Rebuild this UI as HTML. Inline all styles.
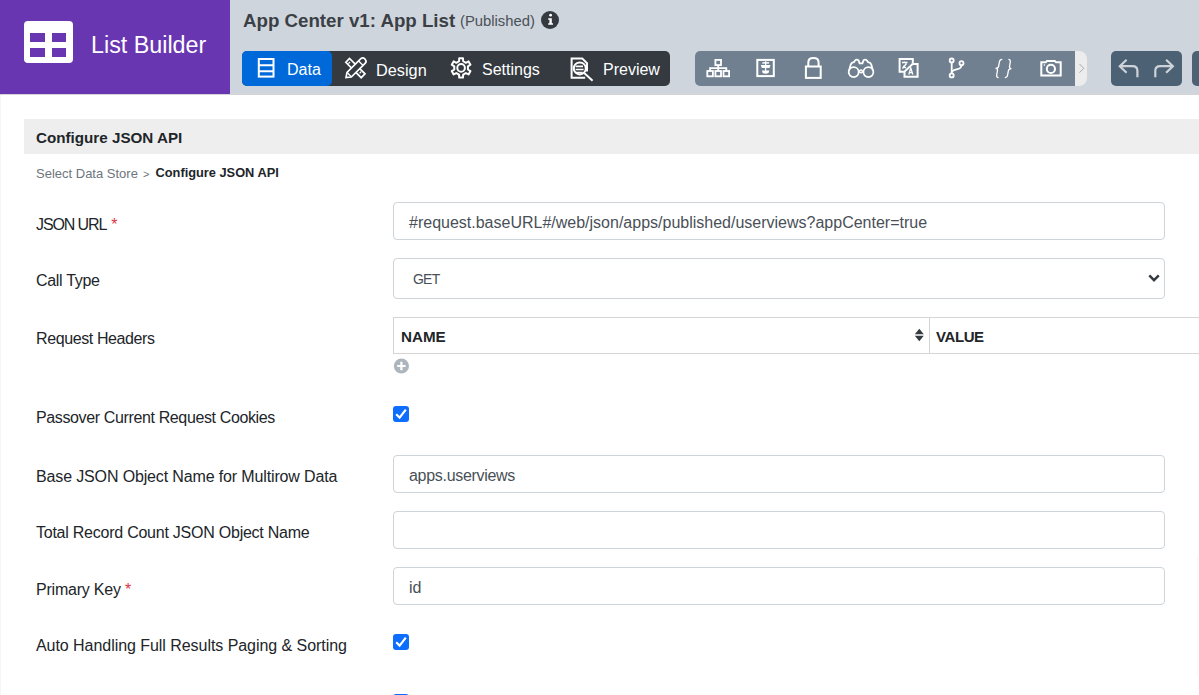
<!DOCTYPE html>
<html><head><meta charset="utf-8">
<style>
*{box-sizing:border-box;margin:0;padding:0}
html,body{width:1199px;height:695px;overflow:hidden;background:#fff;font-family:"Liberation Sans",sans-serif;color:#212529}
.abs{position:absolute;white-space:nowrap}
#hdr{position:absolute;left:0;top:0;width:1199px;height:94px;background:#cfd5dc}
#hdrline{position:absolute;left:0;top:93px;width:1199px;height:2px;background:#d3d5d8}
#brand{position:absolute;left:0;top:0;width:230px;height:94px;background:#6936b1}
#logo{position:absolute;left:24px;top:21px;width:48.5px;height:42px;background:#fff;border-radius:4px}
#logo i{position:absolute;width:14.7px;height:9px;background:#6936b1}
.t{position:absolute;white-space:nowrap;line-height:1}
.lbl{position:absolute;left:36px;font-size:16px;line-height:17px;color:#212529;white-space:nowrap}
.req{color:#dc3545}
.inp{position:absolute;left:393px;width:772px;height:38px;border:1px solid #ced4da;border-radius:4px}
.itxt{position:absolute;left:409px;font-size:16px;line-height:17px;color:#495057;white-space:nowrap}
.chk{position:absolute;left:393px;width:16px;height:16px;background:#0d6efd;border-radius:3px}
svg{position:absolute;left:0;top:0;overflow:visible}
</style></head>
<body>
<div id="hdr"></div>
<div id="hdrline"></div>
<div id="brand">
  <div id="logo">
    <i style="left:6.4px;top:12px"></i><i style="left:27.6px;top:12px"></i>
    <i style="left:6.4px;top:27.2px"></i><i style="left:27.6px;top:27.2px"></i>
  </div>
</div>
<div class="t" style="left:91px;top:33.5px;font-size:23.3px;color:#fff">List Builder</div>
<div class="t" style="left:243px;top:11.5px;font-size:18.7px;font-weight:bold;color:#3a4046">App Center v1: App List</div>
<div class="t" style="left:460px;top:14.1px;font-size:14.8px;color:#495057">(Published)</div>
<div class="abs" style="left:541px;top:10.5px;width:18px;height:18px;border-radius:50%;background:#343a40"></div>

<!-- main buttons -->
<div class="abs" style="left:242px;top:51px;width:428px;height:35px;border-radius:5px;background:#343a40"></div>
<div class="abs" style="left:242px;top:51px;width:90px;height:35px;border-radius:5px;background:#0069d9"></div>
<div class="t" style="left:287px;top:61.5px;font-size:16px;color:#fff">Data</div>
<div class="t" style="left:376px;top:61.5px;font-size:16.3px;color:#fff">Design</div>
<div class="t" style="left:482px;top:61.5px;font-size:16px;color:#fff">Settings</div>
<div class="t" style="left:603px;top:61.5px;font-size:16px;color:#fff">Preview</div>

<!-- tool bar -->
<div class="abs" style="left:695px;top:51px;width:392px;height:35px;border-radius:5px 8px 8px 5px;background:#ececec"></div>
<div class="abs" style="left:695px;top:51px;width:380px;height:35px;border-radius:5px 0 0 5px;background:#708090"></div>
<div class="abs" style="left:1111px;top:51px;width:71px;height:35px;border-radius:5px;background:#4d6174"></div>
<div class="abs" style="left:1192px;top:51px;width:20px;height:35px;border-radius:5px;background:#4d6174"></div>

<svg width="1199" height="695" viewBox="0 0 1199 695">
 <g fill="none" stroke="#fff" stroke-width="2">
  <!-- info i -->
  <!-- data icon -->
  <rect x="258.8" y="59" width="14.7" height="17.6"/>
  <path d="M259 65.3H274M259 71.3H274"/>
  <!-- design: ruler + pencil -->
  <path d="M345.8 62.3L349.5 58.4L365 73.8L361.2 77.7Z" stroke-width="1.7"/><path d="M348.4 63.6L350 62M359.6 73.2L361.2 71.6" stroke-width="1.3"/>
  <path d="M346 77.6L347 72.4L360.6 58.9Q362.8 56.9 365 59.1L365.1 59.2Q367.1 61.4 365.1 63.4L351.3 77Z" fill="#343a40" stroke-width="1.7"/><path d="M347.2 72.5L351.2 76.8M358.6 61L363.2 65.5" stroke-width="1.3"/>
  <!-- gear -->
  <circle cx="461.1" cy="67.9" r="3.8"/>
  <path d="M459.05 61.21 L459.21 58.18 L462.99 58.18 L463.15 61.21 L465.87 62.78 L468.57 61.41 L470.46 64.68 L467.92 66.33 L467.92 69.47 L470.46 71.12 L468.57 74.39 L465.87 73.02 L463.15 74.59 L462.99 77.62 L459.21 77.62 L459.05 74.59 L456.33 73.02 L453.63 74.39 L451.74 71.12 L454.28 69.47 L454.28 66.33 L451.74 64.68 L453.63 61.41 L456.33 62.78Z" stroke-linejoin="round"/>
  <!-- preview doc -->
  <path d="M585.2 77.8H571.6V58.4H582.2L587 63.2V71.5"/>
  <circle cx="579.8" cy="68.4" r="6"/>
  <path d="M575.6 66.4H583M575.6 69.5H583.6M575.6 72.6H582.6" stroke-width="1.6"/>
  <path d="M584.2 73L592.6 80.8" stroke-width="2"/>
 </g>
 <g fill="none" stroke="#fff" stroke-width="1.8">
  <!-- sitemap -->
  <rect x="715.4" y="59.9" width="5.6" height="5.2"/>
  <rect x="707.3" y="71" width="5.6" height="5.3"/>
  <rect x="715.4" y="71" width="5.6" height="5.3"/>
  <rect x="723.5" y="71" width="5.6" height="5.3"/>
  <path d="M718.2 65V71M710.1 71V68.2H726.3V71"/>
  <!-- form icon -->
  <rect x="757.3" y="59.9" width="16.5" height="16.2" stroke-width="2"/>
  <path d="M765.6 61.2V71" stroke-width="1.2"/>
  <path d="M762.3 62.9H769" stroke-width="1.5"/>
  <path d="M760.8 65H770.5L769.5 67.9H761.8Z" fill="#fff" stroke="none"/>
  <path d="M762 70.5H769.2Q769.2 73.8 765.6 73.8Q762 73.8 762 70.5Z" fill="#fff" stroke="none"/>
  <!-- lock -->
  <rect x="805.9" y="66.5" width="14.8" height="11.4" stroke-width="2"/>
  <path d="M808.3 66.5V62.5Q808.3 58.1 813.4 58.1Q818.6 58.1 818.6 62.5V66.5" stroke-width="2"/>
  <!-- binoculars -->
  <circle cx="853.7" cy="72.1" r="5"/>
  <circle cx="868.4" cy="72.1" r="5"/>
  <circle cx="861" cy="71.4" r="1.4" stroke-width="1.5"/>
  <path d="M849.1 70.5L850.8 64.3Q851.6 62.4 854 62.2L855 60.6Q856.6 59 858.4 60.2L859.6 63.3H862.4L863.6 60.2Q865.4 59 867 60.6L868 62.2Q870.4 62.4 871.2 64.3L872.9 70.5"/>
  <!-- translate -->
  <path d="M903.9 71.8H899.6V59H912.8V63.8" stroke-width="2"/>
  <path d="M912.6 64.1H917.6V76.8H904.5V71.6L912.6 64.1" stroke-width="2"/>
  <path d="M902 62.5H907.5M904.5 61.5V63M906.5 63.5L902.5 68.5M903 66L906 68" stroke-width="1.3"/>
  <path d="M908.8 74.5L910.8 68L912.8 74.5M909.4 72.7H912.2" stroke-width="1.3"/>
  <!-- branch -->
  <circle cx="951.7" cy="60.5" r="2"/>
  <circle cx="951.7" cy="75.4" r="2"/>
  <circle cx="961.5" cy="63.2" r="2"/>
  <path d="M951.7 62.5V73.4M961.5 65.2Q961.3 68.2 957.5 69.2L954 70.2Q951.9 71 951.7 73"/>
  <!-- camera -->
  <path d="M1041.3 62.2H1045.8L1047 60.9H1054.8L1056 62.2H1060.7V75.5H1041.3Z" stroke-width="2"/>
  <circle cx="1050.9" cy="68.9" r="4.1" stroke-width="2"/>
  <path d="M1043.8 65H1045" stroke-width="1.5"/>
 </g>
 <!-- scroll chevron -->
 <path d="M1079.5 64L1083.8 68.3L1079.5 72.6" fill="none" stroke="#a9a9a9" stroke-width="1"/>
 <!-- braces -->
 <path d="M1002.2 59.4Q999.8 59.4 999.4 62L998.6 66.4Q998.3 68.2 995.6 68.4Q997.8 68.6 997.5 70.4L996.7 75Q996.3 77.6 998.6 77.6M1004.8 77.6Q1007.2 77.6 1007.6 75L1008.4 70.6Q1008.7 68.8 1011.4 68.6Q1009.2 68.4 1009.5 66.6L1010.3 62Q1010.7 59.4 1008.4 59.4" fill="none" stroke="#fff" stroke-width="1.3"/>
 <!-- undo/redo -->
 <g fill="none" stroke="#cdd3d9" stroke-width="2.2">
  <path d="M1126.6 59.8L1119.8 66.2L1126.6 72.8M1119.8 66.2H1132.5Q1137.4 66.2 1137.4 71V77.2"/>
  <path d="M1166.1 59.8L1172.9 66.2L1166.1 72.8M1172.9 66.2H1160.2Q1155.3 66.2 1155.3 71V77.2"/>
 </g>
 <!-- info icon i -->
 <g fill="#fff">
  <circle cx="550.6" cy="15.2" r="1.4"/>
  <path d="M548.2 18.3H551.8V23.3H553V24.7H548.2V23.3H549.4V19.7H548.2Z"/>
 </g>
</svg>

<!-- content -->
<div class="abs" style="left:0;top:95px;width:1px;height:600px;background:#f6f6f6"></div><div class="abs" style="left:1197px;top:555px;width:1px;height:120px;background:#f6f6f6"></div>
<div class="abs" style="left:24px;top:119px;width:1175px;height:35px;background:#eee"></div>
<div class="t" style="left:36px;top:130px;font-size:15.2px;font-weight:bold;color:#212529">Configure JSON API</div>
<div class="t" style="left:36px;top:167px;font-size:13px;color:#6c757d">Select Data Store</div><div class="t" style="left:143px;top:168.5px;font-size:11px;color:#6c757d">&gt;</div><div class="t" style="left:155.5px;top:167px;font-size:12.8px;font-weight:bold;color:#212529">Configure JSON API</div>

<div class="lbl" style="top:215.8px;letter-spacing:-1.1px">JSON URL</div><div class="lbl req" style="left:111.3px;top:216.3px">*</div>
<div class="inp" style="top:202px"></div>
<div class="itxt" style="top:213.5px">#request.baseURL#/web/json/apps/published/userviews?appCenter=true</div>

<div class="lbl" style="top:272.2px;letter-spacing:-0.3px">Call Type</div>
<div class="inp" style="top:258px;height:40.5px"></div>
<div class="itxt" style="left:413px;top:271.2px;font-size:14px;letter-spacing:-0.8px;color:#495057">GET</div>
<svg width="1199" height="695"><path d="M1149.3 275.4L1154 280.2L1158.8 275.4" fill="none" stroke="#343a40" stroke-width="2.4"/></svg>

<div class="lbl" style="top:329.6px;letter-spacing:-0.39px">Request Headers</div>
<div class="abs" style="left:393px;top:317px;width:820px;height:37px;border:1px solid #d5d5d5;border-right:none"></div>
<div class="abs" style="left:929px;top:318px;width:1px;height:35px;background:#d5d5d5"></div>
<div class="t" style="left:401px;top:329.3px;font-size:15.2px;font-weight:bold;color:#212529">NAME</div>
<div class="t" style="left:936px;top:329.3px;font-size:15px;letter-spacing:-0.4px;font-weight:bold;color:#212529">VALUE</div>
<svg width="1199" height="695">
 <path d="M914.8 334.2L919.3 328.8L923.8 334.2ZM914.8 335.8L919.3 341.2L923.8 335.8Z" fill="#343a40"/>
 <circle cx="401.4" cy="366" r="7.6" fill="#adb5bd"/>
 <path d="M401.4 361.8V370.2M397.2 366H405.6" stroke="#fff" stroke-width="2.2"/>
</svg>

<div class="lbl" style="top:408.7px;letter-spacing:-0.37px">Passover Current Request Cookies</div>
<div class="chk" style="top:405.5px"></div>

<div class="lbl" style="top:468.2px;letter-spacing:-0.14px">Base JSON Object Name for Multirow Data</div>
<div class="inp" style="top:455px"></div>
<div class="itxt" style="top:466.5px;letter-spacing:-0.3px">apps.userviews</div>

<div class="lbl" style="top:524.1px;letter-spacing:-0.24px">Total Record Count JSON Object Name</div>
<div class="inp" style="top:511px"></div>

<div class="lbl" style="top:581.0px;letter-spacing:-0.21px">Primary Key <span class="req">*</span></div>
<div class="inp" style="top:567px"></div>
<div class="itxt" style="top:578.5px">id</div>

<div class="lbl" style="top:637.1px;letter-spacing:-0.05px">Auto Handling Full Results Paging &amp; Sorting</div>
<div class="chk" style="top:633.5px"></div>
<div class="chk" style="top:693.6px"></div>
<svg width="1199" height="695"><g fill="none" stroke="#fff" stroke-width="2.2">
 <path d="M396.2 414.2L399.6 417.6L405.8 409.6"/>
 <path d="M396.2 642.2L399.6 645.6L405.8 637.6"/>
</g></svg>
</body></html>
